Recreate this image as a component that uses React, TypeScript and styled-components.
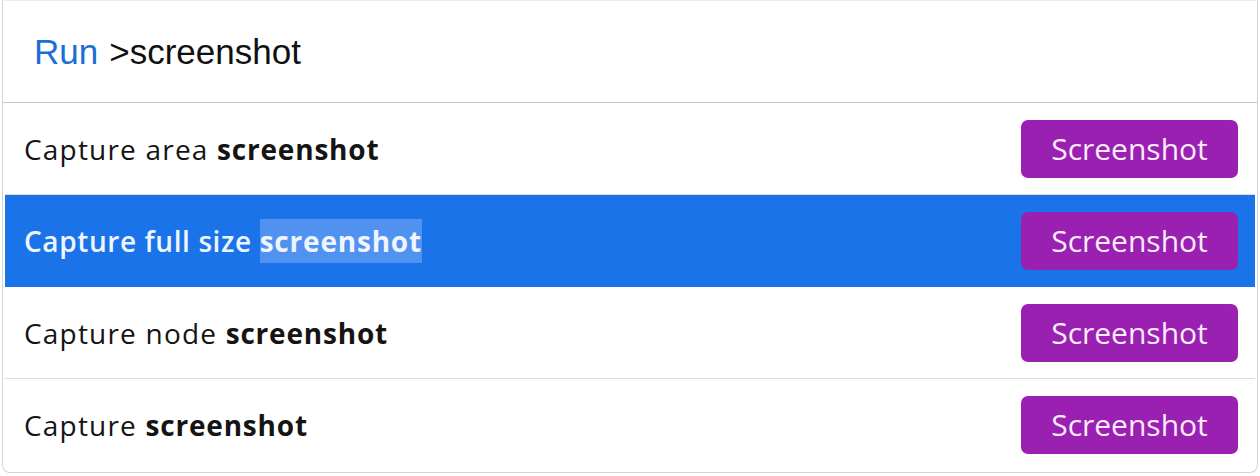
import * as React from "react";
import styled, { createGlobalStyle } from "styled-components";

const GlobalStyle = createGlobalStyle`
  html, body {
    margin: 0;
    padding: 0;
    background: #ffffff;
  }
`;

const Panel = styled.div`
  box-sizing: border-box;
  width: 1256px;
  height: 473px;
  margin: 0 0 0 2px;
  border: 1px solid #d4d4d4;
  border-top-color: #ececec;
  border-radius: 0 0 8px 8px;
  background: #ffffff;
  overflow: hidden;
`;

const Header = styled.div`
  display: flex;
  align-items: center;
  height: 101px;
  padding-left: 31px;
  border-bottom: 1px solid #c8c8c8;
  font-family: "Liberation Sans", Arial, sans-serif;
  font-size: 35px;
  color: #111111;
`;

const Prompt = styled.span`
  color: #1a6fd4;
  margin-right: 11px;
`;

const List = styled.div`
  padding: 0 2px;
`;

const Row = styled.div<{ $selected?: boolean; $last?: boolean }>`
  display: flex;
  align-items: center;
  justify-content: space-between;
  height: 91px;
  padding: 0 17px 0 19px;
  border-bottom: ${({ $last, $selected }) =>
    $last ? "none" : $selected ? "1px solid #1a73e8" : "1px solid #dcdcdc"};
  background: ${({ $selected }) => ($selected ? "#1a73e8" : "transparent")};
  color: ${({ $selected }) => ($selected ? "#eef5ff" : "#141414")};
  font-family: "Open Sans", "Noto Sans", sans-serif;
  font-size: 28px;
`;

const Label = styled.span<{ $selected?: boolean }>`
  letter-spacing: ${({ $selected }) => ($selected ? "0.6px" : "1.2px")};
  font-weight: ${({ $selected }) => ($selected ? 600 : 400)};
`;

const Match = styled.b<{ $selected?: boolean }>`
  font-weight: 700;
  letter-spacing: 0.8px;
  padding: 3px 0;
  background: ${({ $selected }) => ($selected ? "#5192f0" : "transparent")};
`;

const Button = styled.button`
  width: 217px;
  height: 58px;
  border: none;
  border-radius: 7px;
  background: #9a20b2;
  color: #fcecfb;
  font-family: "Open Sans", "Noto Sans", sans-serif;
  font-size: 30px;
  cursor: pointer;
`;

const items = [
  { label: "Capture area " },
  { label: "Capture full size ", selected: true },
  { label: "Capture node " },
  { label: "Capture " },
];

const App = () => {
  return (
    <>
      <GlobalStyle />
      <Panel>
        <Header>
          <Prompt>Run</Prompt>&gt;screenshot
        </Header>
        <List>
          {items.map((item, i) => (
            <Row
              key={item.label}
              $selected={item.selected}
              $last={i === items.length - 1}
            >
              <Label $selected={item.selected}>
                {item.label}
                <Match $selected={item.selected}>screenshot</Match>
              </Label>
              <Button>Screenshot</Button>
            </Row>
          ))}
        </List>
      </Panel>
    </>
  );
};

export default App;
